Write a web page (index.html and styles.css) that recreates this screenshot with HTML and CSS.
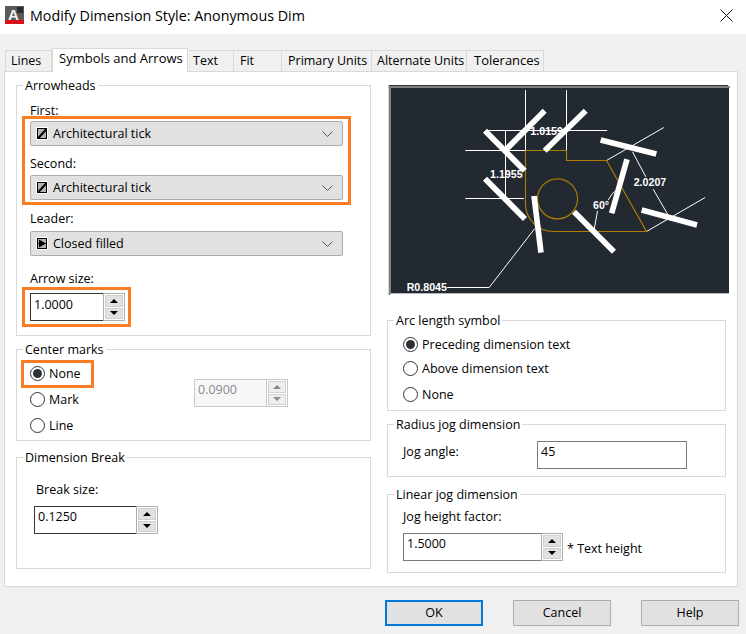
FILE: index.html
```html
<!DOCTYPE html>
<html lang="en">

<head>
    <meta charset="UTF-8">
    <meta name="viewport" content="width=device-width, initial-scale=1.0">
    <title>Modify Dimension Style</title>
    <link rel="stylesheet" href="styles.css">
</head>

<body>

    <div class="titlebar">
        <svg class="app-icon" width="19" height="18" viewBox="0 0 19 18">
            <rect x="0" y="0" width="19" height="18" fill="#5a5a5a"/>
            <rect x="0" y="14" width="19" height="4" fill="#d8101c"/>
            <rect x="12" y="1" width="6" height="6" fill="#2a2a2a"/>
            <text x="3" y="14" class="app-letter">A</text>
        </svg>
        <span class="title">Modify Dimension Style: Anonymous Dim</span>
        <svg class="close" width="13" height="13" viewBox="0 0 13 13">
            <path d="M0.5 0.5L12.5 12.5M12.5 0.5L0.5 12.5" stroke="#111" fill="none"/>
        </svg>
    </div>

    <div class="dialog">
        <div class="tabs">
            <div class="tab tab-lines">Lines</div>
            <div class="tab tab-active">Symbols and Arrows</div>
            <div class="tab tab-text">Text</div>
            <div class="tab tab-fit">Fit</div>
            <div class="tab tab-primary">Primary Units</div>
            <div class="tab tab-alt">Alternate Units</div>
            <div class="tab tab-tol">Tolerances</div>
        </div>

        <div class="panel">
            <div class="col col-left">
                <div class="group group-arrows">
                    <div class="legend">Arrowheads</div>
                    <div class="label label-first">First:</div>
                    <div class="combo combo-first">
                        <svg class="combo-icon" width="12" height="13" viewBox="0 0 12 13">
                            <rect x="0" y="0" width="12" height="13" fill="#fff"/>
                            <rect x="1.5" y="1.5" width="9" height="10" fill="#b4b4b4" stroke="#000"/>
                            <path d="M2 11.5L10.5 2" stroke="#000" stroke-width="2" fill="none"/>
                        </svg>
                        <span>Architectural tick</span>
                        <svg class="chevron" width="11" height="6" viewBox="0 0 11 6"><path d="M0.5 0.5L5.5 5.5L10.5 0.5" stroke="#555" fill="none"/></svg>
                    </div>
                    <div class="label label-second">Second:</div>
                    <div class="combo combo-second">
                        <svg class="combo-icon" width="12" height="13" viewBox="0 0 12 13">
                            <rect x="0" y="0" width="12" height="13" fill="#fff"/>
                            <rect x="1.5" y="1.5" width="9" height="10" fill="#b4b4b4" stroke="#000"/>
                            <path d="M2 11.5L10.5 2" stroke="#000" stroke-width="2" fill="none"/>
                        </svg>
                        <span>Architectural tick</span>
                        <svg class="chevron" width="11" height="6" viewBox="0 0 11 6"><path d="M0.5 0.5L5.5 5.5L10.5 0.5" stroke="#555" fill="none"/></svg>
                    </div>
                    <div class="label label-leader">Leader:</div>
                    <div class="combo combo-leader">
                        <svg class="combo-icon" width="12" height="13" viewBox="0 0 12 13">
                            <rect x="0" y="0" width="12" height="13" fill="#fff"/>
                            <rect x="1.5" y="1.5" width="9" height="10" fill="#b4b4b4" stroke="#000"/>
                            <path d="M1 6.5H11" stroke="#000"/>
                            <path d="M3 2.5L10 6.5L3 10.5Z" fill="#000"/>
                        </svg>
                        <span>Closed filled</span>
                        <svg class="chevron" width="11" height="6" viewBox="0 0 11 6"><path d="M0.5 0.5L5.5 5.5L10.5 0.5" stroke="#555" fill="none"/></svg>
                    </div>
                    <div class="label label-size">Arrow size:</div>
                    <div class="field field-size">
                        <div class="input input-dark input-size">1.0000</div>
                        <div class="spin"><div class="spin-btn"><i class="up"></i></div><div class="spin-btn"><i class="down"></i></div></div>
                    </div>
                    <div class="mark mark-combos"></div>
                    <div class="mark mark-size"></div>
                </div>

                <div class="group group-center">
                    <div class="legend">Center marks</div>
                    <div class="center-row">
                        <div class="radios">
                            <div class="radio-row"><span class="radio radio-on"></span>None</div>
                            <div class="radio-row"><span class="radio"></span>Mark</div>
                            <div class="radio-row"><span class="radio"></span>Line</div>
                        </div>
                        <div class="field field-off">
                            <div class="input input-off">0.0900</div>
                            <div class="spin spin-off"><div class="spin-btn"><i class="up"></i></div><div class="spin-btn"><i class="down"></i></div></div>
                        </div>
                    </div>
                    <div class="mark mark-none"></div>
                </div>

                <div class="group group-break">
                    <div class="legend">Dimension Break</div>
                    <div class="label label-break">Break size:</div>
                    <div class="field field-break">
                        <div class="input input-dark input-break">0.1250</div>
                        <div class="spin"><div class="spin-btn"><i class="up"></i></div><div class="spin-btn"><i class="down"></i></div></div>
                    </div>
                </div>
            </div>

            <div class="col col-right">
                <svg class="preview" width="342" height="210" viewBox="45 255 1026 630">
                    <rect x="45" y="255" width="1026" height="630" fill="#fff"/>
                    <rect x="47" y="258" width="1026" height="6" fill="#808080"/>
                    <rect x="47" y="255" width="1018" height="3" fill="#333"/>
                    <rect x="47" y="258" width="6" height="627" fill="#808080"/>
                    <rect x="53" y="264" width="1015" height="616" fill="#222931"/>

                    <g class="dim-lines" transform="translate(0.5 0.5)">
                        <path d="M457 270V450M580 270V450M340 391H702M276 451H457M276 595H452M397 392V588"/>
                        <path d="M700 481L872 382M820 694L996 592M778 455L818 530M840 567L885 645"/>
                        <path d="M705 600Q715 578 732 568M673 632L662 694"/>
                        <path d="M485 685L348 862H222"/>
                    </g>
                    <g class="part" transform="translate(0.5 0.5)">
                        <path d="M457 451H580V481H700L820 694H540A83 83 0 0 1 457 611Z"/>
                        <circle cx="553" cy="596" r="60"/>
                    </g>
                    <g class="ticks">
                        <path d="M336 392L455 512M515 332L396 452M638 332L515 452M336 536L456 657"/>
                        <path d="M683 420L850 462M762 478L716 640M806 630L972 675M483 588L504 758M603 635L723 755"/>
                    </g>
                    <g class="dim-text">
                        <text x="472" y="404">1.0159</text>
                        <text x="351" y="535">1.1955</text>
                        <text x="782" y="557">2.0207</text>
                        <text x="660" y="627">60°</text>
                        <text x="101" y="874">R0.8045</text>
                    </g>
                </svg>

                <div class="group group-arc">
                    <div class="legend">Arc length symbol</div>
                    <div class="radio-row row-arc"><span class="radio radio-on"></span>Preceding dimension text</div>
                    <div class="radio-row row-arc"><span class="radio"></span>Above dimension text</div>
                    <div class="radio-row row-arc row-arc-last"><span class="radio"></span>None</div>
                </div>

                <div class="group group-radius">
                    <div class="legend">Radius jog dimension</div>
                    <div class="radius-row">
                        <div class="radius-label">Jog angle:</div>
                        <div class="input input-plain input-angle">45</div>
                    </div>
                </div>

                <div class="group group-linear">
                    <div class="legend">Linear jog dimension</div>
                    <div class="label label-jog">Jog height factor:</div>
                    <div class="field field-jog">
                        <div class="input input-plain input-jog">1.5000</div>
                        <div class="spin"><div class="spin-btn"><i class="up"></i></div><div class="spin-btn"><i class="down"></i></div></div>
                        <span class="suffix">* Text height</span>
                    </div>
                </div>
            </div>
        </div>

        <div class="buttons">
            <button class="btn btn-default">OK</button>
            <button class="btn">Cancel</button>
            <button class="btn">Help</button>
        </div>
    </div>

</body>

</html>
```

FILE: styles.css
```css
body {
    font-family: "Open Sans", "Noto Sans", sans-serif;
    font-size: 12.5px;
    color: #000;
    background-color: #f0f0f0;
    margin: 0;
    height: 634px;
    overflow: hidden;
}

.titlebar {
    height: 34px;
    background: white;
    display: flex;
    align-items: center;
    padding: 0 13px 0 5px;
}

.app-icon {
    margin-bottom: 4px;
}

.app-letter {
    font-family: "Liberation Sans", sans-serif;
    font-weight: bold;
    font-size: 15px;
    fill: #f2f2f2;
}

.title {
    font-size: 14.3px;
    margin: 0 0 3px 6px;
    flex: 1;
}

.close {
    margin-bottom: 4px;
}

.dialog {
    padding: 14px 9px 0 4px;
}

.tabs {
    display: flex;
    align-items: flex-end;
    height: 23px;
    padding-left: 1px;
}

.tab {
    box-sizing: border-box;
    height: 21px;
    line-height: 19px;
    background: #f0f0f0;
    border: 1px solid #d9d9d9;
    border-bottom: none;
    border-left: none;
    padding-left: 5px;
    white-space: nowrap;
    overflow: hidden;
}

.tab-lines { width: 47px; border-left: 1px solid #d9d9d9; }
.tab-text { width: 46px; }
.tab-fit { width: 48px; padding-left: 6px; }
.tab-primary { width: 90px; padding-left: 6px; }
.tab-alt { width: 95px; }
.tab-tol { width: 77px; padding-left: 7px; font-size: 13px; line-height: 18px; }

.tab-active {
    width: 136px;
    height: 24px;
    line-height: 19px;
    font-size: 13px;
    background: white;
    margin-bottom: -1px;
    padding-left: 6px;
    position: relative;
    z-index: 1;
    border-left: 1px solid #d9d9d9;
}

.panel {
    box-sizing: border-box;
    width: 734px;
    height: 516px;
    background: white;
    border: 1px solid #d9d9d9;
    padding: 13px 0 0 11px;
    display: flex;
    gap: 16px;
}

.col {
    width: 355px;
}

.col-right {
    width: 343px;
}

.group {
    box-sizing: border-box;
    position: relative;
    border: 1px solid #d9d9d9;
    padding-left: 13px;
}

.legend {
    display: table;
    height: 18px;
    line-height: 17px;
    margin: -9px 0 0 -7px;
    padding: 0 2px;
    background: white;
}

.label {
    height: 18px;
    line-height: 18px;
}

/* left column */
.group-arrows { height: 251px; }
.label-first { margin-top: 7px; }
.label-second { margin-top: 9px; }
.label-leader { margin-top: 10px; }
.label-size { margin-top: 14px; }

.combo {
    box-sizing: border-box;
    width: 313px;
    height: 25px;
    background: #e1e1e1;
    border: 1px solid #adadad;
    border-radius: 2px;
    display: flex;
    align-items: center;
    padding: 0 9px 0 5px;
}

.combo span {
    margin: 0 0 1px 5px;
    flex: 1;
}

.combo-first { margin-top: 1px; }
.combo-second { margin-top: 2px; }
.combo-leader { margin-top: 3px; }

.field {
    display: flex;
}

.field-size { margin-top: 5px; }

.input {
    box-sizing: border-box;
    background: white;
    height: 28px;
    line-height: 20px;
    padding-left: 3px;
}

.input-dark {
    border: 1px solid #333;
    border-right: none;
}

.input-plain {
    border: 1px solid #7a7a7a;
}

.input-size { width: 73px; line-height: 21px; }
.input-break { width: 102px; }

.spin {
    box-sizing: border-box;
    width: 22px;
    height: 28px;
    border: 1px solid #adadad;
    padding: 1px;
    display: flex;
    flex-direction: column;
    gap: 1px;
    background: white;
}

.spin-btn {
    flex: 1;
    background: #e1e1e1;
    border: 1px solid #d0d0d0;
    display: flex;
    align-items: center;
    justify-content: center;
}

.spin i {
    width: 0;
    height: 0;
    border-left: 4px solid transparent;
    border-right: 4px solid transparent;
}

.spin i.up { border-bottom: 4px solid #000; }
.spin i.down { border-top: 4px solid #000; }

.mark {
    position: absolute;
    box-sizing: border-box;
    border: 3px solid #fb7d23;
}

.mark-combos { left: 5px; top: 30px; width: 329px; height: 89px; }
.mark-size { left: 5px; top: 201px; width: 109px; height: 40px; }
.mark-none { left: 4px; top: 10px; width: 73px; height: 28px; }

.group-center {
    height: 92px;
    margin-top: 13px;
}

.center-row {
    display: flex;
    margin-top: 1px;
}

.radios {
    width: 164px;
}

.radio-row {
    display: flex;
    align-items: center;
    height: 26px;
}

.radio {
    box-sizing: border-box;
    width: 15px;
    height: 15px;
    border: 1px solid #333;
    border-radius: 50%;
    background: white;
    margin-right: 4px;
    display: flex;
    align-items: center;
    justify-content: center;
}

.radio-on::after {
    content: "";
    width: 9px;
    height: 9px;
    border-radius: 50%;
    background: #2b3138;
}

.field-off { margin-top: 19px; }

.input-off {
    width: 72px;
    border: 1px solid #c8c8c8;
    border-right: none;
    color: #8a8a8a;
    background: #f7f7f7;
}

.spin-off {
    border-color: #c8c8c8;
}

.spin-off .spin-btn {
    background: #eee;
}

.spin-off i.up { border-bottom-color: #8a8a8a; }
.spin-off i.down { border-top-color: #8a8a8a; }

.group-break {
    height: 112px;
    margin-top: 16px;
    padding-left: 19px;
}

.group-break .legend { margin-left: -13px; }
.label-break { margin-top: 14px; }

.field-break {
    margin: 7px 0 0 -2px;
}

/* right column */
.preview {
    display: block;
    margin-left: 1px;
}

.dim-lines path {
    stroke: #fff;
    stroke-width: 3;
    fill: none;
}

.part path,
.part circle {
    stroke: #b07f00;
    stroke-width: 3.4;
    fill: none;
}

.ticks path {
    stroke: #fff;
    stroke-width: 17;
    fill: none;
}

.dim-text text {
    font-family: "Liberation Sans", sans-serif;
    font-size: 32px;
    font-weight: bold;
    fill: #fff;
}

.group-arc {
    width: 339px;
    height: 91px;
    margin-top: 25px;
    padding-left: 15px;
}

.group-arc .legend,
.group-radius .legend,
.group-linear .legend {
    margin-left: -9px;
}

.row-arc {
    height: 24px;
}

.group-arc .legend {
    margin-bottom: 2px;
}

.row-arc-last {
    margin-top: 2px;
}

.group-radius {
    width: 339px;
    height: 53px;
    margin-top: 13px;
    padding-left: 15px;
}

.radius-row {
    display: flex;
    align-items: center;
    margin-top: 7px;
}

.radius-label {
    width: 134px;
    margin-bottom: 8px;
}

.input-angle { width: 150px; }

.group-linear {
    width: 339px;
    height: 79px;
    margin-top: 17px;
    padding-left: 15px;
}

.label-jog { margin-top: 4px; }

.field-jog {
    margin-top: 7px;
}

.input-jog {
    width: 138px;
    border-right: none;
}

.suffix {
    margin: 6px 0 0 4px;
    line-height: 20px;
}

.buttons {
    display: flex;
    justify-content: flex-end;
    gap: 30px;
    margin-top: 13px;
    margin-right: -2px;
}

.btn {
    box-sizing: border-box;
    width: 98px;
    height: 26px;
    background: #e1e1e1;
    border: 1px solid #adadad;
    font-family: inherit;
    font-size: 12.5px;
    color: #000;
    padding: 0 0 2px;
}

.btn-default {
    border: 2px solid #0078d7;
}
```
